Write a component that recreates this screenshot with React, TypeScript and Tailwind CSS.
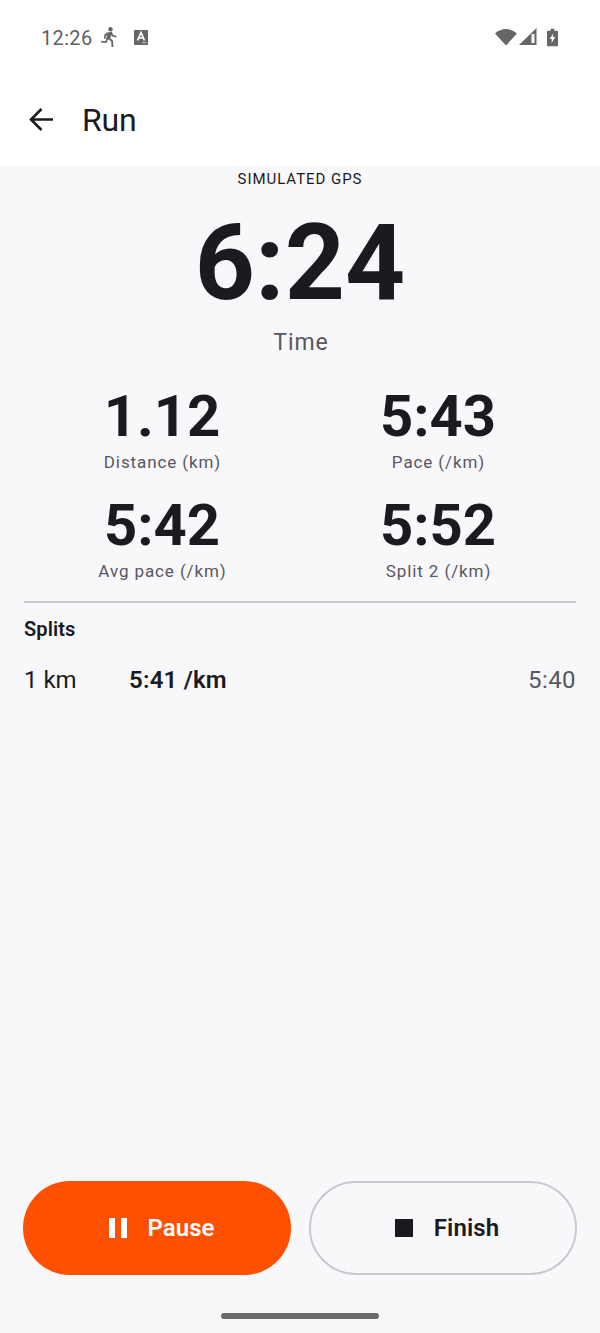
function Stat({ value, label }: { value: string; label: string }) {
  return (
    <div className="flex flex-col items-center">
      <div className="text-[58px] leading-[64px] font-bold text-[#1b1b1f]">{value}</div>
      <div className="text-[17px] leading-[24px] tracking-[0.9px] pl-[1px] text-[#57575f] mt-[2px]">{label}</div>
    </div>
  );
}

export default function App() {
  return (
    <div className="w-[600px] h-[1333px] flex flex-col bg-[#f8f8fb] font-['Roboto',sans-serif] overflow-hidden relative">
      <div className="bg-white h-[166px] shrink-0 flex flex-col">
        <div className="h-[74px] flex items-center justify-between pl-[41px] pr-[42px]">
          <div className="flex items-center">
            <span className="text-[20px] leading-[24px] mt-[2px] text-[#5f5f5f] tracking-[0.35px]">12:26</span>
            <svg className="ml-[6px]" width="20" height="22" viewBox="0 0 20 22" fill="#666">
              <circle cx="11.5" cy="3.2" r="2.2" />
              <path d="M8 6.4 L12.8 5.8 L14.2 9 L17.6 10 L17.2 11.6 L13 10.4 L12.2 9 L11.2 12.2 L14 14.4 L14.4 21 L12.6 21 L12.2 15.4 L9 13.2 L7.6 17 L2 16.4 L2.4 14.8 L6.4 15.2 L8.2 9.2 L6.8 10 L6.6 12.8 L5 12.8 L5.2 8.8 Z" />
            </svg>
            <div className="ml-[15px] w-[14px] h-[15px] bg-[#666] rounded-[1px] flex justify-center">
              <svg width="14" height="15" viewBox="0 0 14 15">
                <path d="M3.5 10.5 L7 2.5 L10.5 10.5 M5 8 H9" fill="none" stroke="#fff" strokeWidth="1.7" />
                <path d="M8 12.7 H12.5" stroke="#ccc" strokeWidth="1" />
              </svg>
            </div>
          </div>
          <div className="flex items-center">
            <svg width="22" height="18" viewBox="0 0 22 18" fill="#666">
              <path d="M0 5.5 C6 -0.5 16 -0.5 22 5.5 L11 17.5 Z" />
            </svg>
            <svg className="ml-[2px]" width="18" height="18" viewBox="0 0 18 18">
              <path d="M0 17 L17.5 0 V17 Z" fill="#666" />
              <path d="M12.5 6 H15.5 V15 H12.5 Z" fill="#fff" />
            </svg>
            <svg className="ml-[10px]" width="11" height="19" viewBox="0 0 12 19" fill="#666">
              <path fillRule="evenodd" d="M4 0 H8 V2 H11 Q12 2 12 3 V18 Q12 19 11 19 H1 Q0 19 0 18 V3 Q0 2 1 2 H4 Z M6.8 5 L3 11 H5.4 L5 15.5 L9 9 H6.4 Z" />
            </svg>
          </div>
        </div>
        <div className="h-[92px] flex items-start pt-[31px]">
          <svg className="ml-[29px] mt-[2px]" width="25" height="25" viewBox="0 0 25 25" fill="none" stroke="#1b1b1f" strokeWidth="2.6">
            <path d="M24 12.5 H2.5 M12.5 2 L2 12.5 L12.5 23" />
          </svg>
          <span className="ml-[28px] text-[32px] leading-[30px] tracking-[-0.2px] text-[#1b1b1f]">Run</span>
        </div>
      </div>

      <div className="flex-1 flex flex-col px-[24px] pt-[1px]">
        <div className="text-center text-[15px] leading-[24px] tracking-[0.95px] text-[#1b1b1f]">SIMULATED GPS</div>
        <div className="text-center text-[105px] leading-[128px] font-bold text-[#1b1b1f] mt-[9px]">6:24</div>
        <div className="text-center text-[23px] leading-[32px] tracking-[0.9px] pl-[2px] text-[#57575f] -mt-[1px]">Time</div>

        <div className="grid grid-cols-2 gap-y-[19px] mt-[25px]">
          <Stat value="1.12" label="Distance (km)" />
          <Stat value="5:43" label="Pace (/km)" />
          <Stat value="5:42" label="Avg pace (/km)" />
          <Stat value="5:52" label="Split 2 (/km)" />
        </div>

        <div className="h-[2px] bg-[#c9c9ce] mt-[18px]" />
        <div className="text-[20px] leading-[28px] font-semibold tracking-[0.1px] text-[#1b1b1f] mt-[12px]">Splits</div>
        <div className="flex items-center mt-[21px] text-[24px] leading-[32px]">
          <span className="w-[105px] text-[#1b1b1f]">1 km</span>
          <span className="font-semibold text-[#1b1b1f] tracking-[0.2px]">5:41 /km</span>
          <span className="ml-auto text-[#57575f] tracking-[0.4px]">5:40</span>
        </div>
      </div>

      <div className="flex justify-between px-[23px] h-[94px] shrink-0">
        <div className="w-[268px] rounded-full bg-[#ff4f00] flex items-center justify-center text-white pl-[10px]">
          <svg width="18" height="20" viewBox="0 0 18 20" fill="#fff">
            <path d="M0 0 H6 V20 H0 Z M12 0 H18 V20 H12 Z" />
          </svg>
          <span className="ml-[20px] text-[24px] font-semibold tracking-[0.05px]">Pause</span>
        </div>
        <div className="w-[268px] rounded-full border-2 border-[#c9c9ce] flex items-center justify-center text-[#1b1b1f] pl-[8px]">
          <div className="w-[18px] h-[18px] bg-[#1b1b1f]" />
          <span className="ml-[21px] text-[24px] font-semibold tracking-[0.1px]">Finish</span>
        </div>
      </div>
      <div className="h-[58px] shrink-0 flex justify-center pt-[38px]">
        <div className="w-[158px] h-[6px] rounded-full bg-[#6b6b6e]" />
      </div>
    </div>
  );
}
